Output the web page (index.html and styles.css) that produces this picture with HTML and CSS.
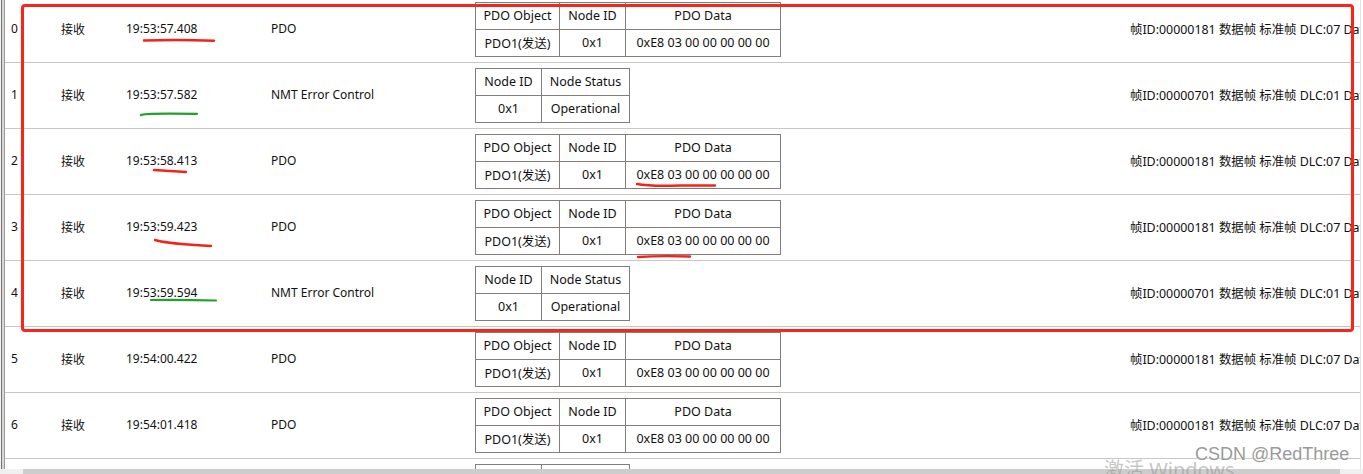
FILE: index.html
```html
<!DOCTYPE html>
<html lang="zh">
<head>
<meta charset="utf-8">
<title>CAN 报文</title>
<link rel="stylesheet" href="styles.css">
</head>
<body>
<div class="window">
  <div class="main">
    <div class="edge1"><div class="edge2"><div class="edge3">
      <div class="view">
        <div class="list">
          <div class="row">
            <div class="c-idx">0</div><div class="c-dir">接收</div><div class="c-time">19:53:57.408</div><div class="c-type">PDO</div>
            <div class="c-tbl"><div class="mt pdo"><div class="mc">PDO Object</div><div class="mc">Node ID</div><div class="mc">PDO Data</div><div class="mc">PDO1(发送)</div><div class="mc">0x1</div><div class="mc">0xE8 03 00 00 00 00 00</div></div></div>
            <div class="c-frame">帧ID:00000181 数据帧 标准帧 DLC:07 Data:E8 03 00 00 00 00 00</div>
          </div>
          <div class="row">
            <div class="c-idx">1</div><div class="c-dir">接收</div><div class="c-time">19:53:57.582</div><div class="c-type">NMT Error Control</div>
            <div class="c-tbl"><div class="mt nmt"><div class="mc">Node ID</div><div class="mc">Node Status</div><div class="mc">0x1</div><div class="mc">Operational</div></div></div>
            <div class="c-frame">帧ID:00000701 数据帧 标准帧 DLC:01 Data:05</div>
          </div>
          <div class="row">
            <div class="c-idx">2</div><div class="c-dir">接收</div><div class="c-time">19:53:58.413</div><div class="c-type">PDO</div>
            <div class="c-tbl"><div class="mt pdo"><div class="mc">PDO Object</div><div class="mc">Node ID</div><div class="mc">PDO Data</div><div class="mc">PDO1(发送)</div><div class="mc">0x1</div><div class="mc">0xE8 03 00 00 00 00 00</div></div></div>
            <div class="c-frame">帧ID:00000181 数据帧 标准帧 DLC:07 Data:E8 03 00 00 00 00 00</div>
          </div>
          <div class="row">
            <div class="c-idx">3</div><div class="c-dir">接收</div><div class="c-time">19:53:59.423</div><div class="c-type">PDO</div>
            <div class="c-tbl"><div class="mt pdo"><div class="mc">PDO Object</div><div class="mc">Node ID</div><div class="mc">PDO Data</div><div class="mc">PDO1(发送)</div><div class="mc">0x1</div><div class="mc">0xE8 03 00 00 00 00 00</div></div></div>
            <div class="c-frame">帧ID:00000181 数据帧 标准帧 DLC:07 Data:E8 03 00 00 00 00 00</div>
          </div>
          <div class="row">
            <div class="c-idx">4</div><div class="c-dir">接收</div><div class="c-time">19:53:59.594</div><div class="c-type">NMT Error Control</div>
            <div class="c-tbl"><div class="mt nmt"><div class="mc">Node ID</div><div class="mc">Node Status</div><div class="mc">0x1</div><div class="mc">Operational</div></div></div>
            <div class="c-frame">帧ID:00000701 数据帧 标准帧 DLC:01 Data:05</div>
          </div>
          <div class="row">
            <div class="c-idx">5</div><div class="c-dir">接收</div><div class="c-time">19:54:00.422</div><div class="c-type">PDO</div>
            <div class="c-tbl"><div class="mt pdo"><div class="mc">PDO Object</div><div class="mc">Node ID</div><div class="mc">PDO Data</div><div class="mc">PDO1(发送)</div><div class="mc">0x1</div><div class="mc">0xE8 03 00 00 00 00 00</div></div></div>
            <div class="c-frame">帧ID:00000181 数据帧 标准帧 DLC:07 Data:E8 03 00 00 00 00 00</div>
          </div>
          <div class="row">
            <div class="c-idx">6</div><div class="c-dir">接收</div><div class="c-time">19:54:01.418</div><div class="c-type">PDO</div>
            <div class="c-tbl"><div class="mt pdo"><div class="mc">PDO Object</div><div class="mc">Node ID</div><div class="mc">PDO Data</div><div class="mc">PDO1(发送)</div><div class="mc">0x1</div><div class="mc">0xE8 03 00 00 00 00 00</div></div></div>
            <div class="c-frame">帧ID:00000181 数据帧 标准帧 DLC:07 Data:E8 03 00 00 00 00 00</div>
          </div>
          <div class="row">
            <div class="c-idx">7</div><div class="c-dir">接收</div><div class="c-time">19:54:01.594</div><div class="c-type">NMT Error Control</div>
            <div class="c-tbl"><div class="mt nmt"><div class="mc">Node ID</div><div class="mc">Node Status</div><div class="mc">0x1</div><div class="mc">Operational</div></div></div>
            <div class="c-frame">帧ID:00000701 数据帧 标准帧 DLC:01 Data:05</div>
          </div>
        </div>
      </div>
    </div></div></div>
  </div>
  <div class="hscroll">
    <div class="sb-btn"><span class="arrow-l"></span></div>
    <div class="sb-thumb"></div>
    <div class="sb-btn"><span class="arrow-r"></span></div>
  </div>
</div>

<svg class="marks" width="1363" height="474" viewBox="0 0 1363 474" xmlns="http://www.w3.org/2000/svg">
  <path d="M22.5 8 Q22.5 5.5 25 5.5 L1350 5.5 Q1352.5 5.5 1352.5 8 L1352.5 328 Q1352.5 330.5 1350 330.5 L25 330.5 Q22.5 330.5 22.5 328 Z" fill="none" stroke="#fb2419" stroke-width="3"/>
  <path d="M144 40.5 Q180 39.5 214 40.8" fill="none" stroke="#f5221a" stroke-width="2.4" stroke-linecap="round"/>
  <path d="M141 115 Q143 113.5 170 113.6 L197 113.8" fill="none" stroke="#22a12a" stroke-width="2.2" stroke-linecap="round"/>
  <path d="M154 170 Q170 171 186 172" fill="none" stroke="#f5221a" stroke-width="2.4" stroke-linecap="round"/>
  <path d="M637 184 Q650 186.5 680 185.5 L715 185.5" fill="none" stroke="#f5221a" stroke-width="2.4" stroke-linecap="round"/>
  <path d="M155 240 Q165 243 195 245 L211 246" fill="none" stroke="#f5221a" stroke-width="2.4" stroke-linecap="round"/>
  <path d="M638 257 Q660 255.5 690 256.5" fill="none" stroke="#f5221a" stroke-width="2.4" stroke-linecap="round"/>
  <path d="M151 300 Q180 299.5 216 300.5" fill="none" stroke="#22a12a" stroke-width="2.2" stroke-linecap="round"/>
</svg>
<div class="wm-win">激活 Windows</div>
<div class="wm-csdn">CSDN @RedThree</div>
</body>
</html>
```
FILE: styles.css
```css
html, body {
  margin: 0;
  padding: 0;
  background: #ffffff;
  overflow: hidden;
}
body {
  width: 1363px;
  height: 474px;
  position: relative;
  font-family: "Noto Sans", "Noto Sans CJK SC", sans-serif;
  font-size: 12px;
  color: #111111;
}
.window {
  display: flex;
  flex-direction: column;
  height: 474px;
}
.main {
  height: 469px;
  flex: none;
  display: flex;
  border-left: 1px solid #f2f2f2;
  overflow: hidden;
}
.edge1 {
  flex: 1;
  display: flex;
  border-left: 1px solid #767676;
}
.edge2 {
  flex: 1;
  display: flex;
  border-left: 2px solid #d6d6d6;
}
.edge3 {
  flex: 1;
  display: flex;
  border-left: 1px solid #9c9c9c;
  padding-right: 2px;
}
.view {
  flex: 1;
  overflow: hidden;
  border-right: 1px solid #e4e4e4;
}
.list {
  margin-top: -3px;
  display: flex;
  flex-direction: column;
}
.row {
  height: 66px;
  box-sizing: border-box;
  border-bottom: 1px solid #c8c8c2;
  display: grid;
  grid-template-columns: 50px 65px 145px 204px 655px 1fr;
  align-items: center;
  padding-left: 6px;
  white-space: nowrap;
}
.c-idx, .c-dir, .c-time, .c-type, .c-frame {
  padding-bottom: 2px;
}
.c-frame {
  overflow: hidden;
  font-size: 12.4px;
}
.c-tbl {
  display: flex;
}
.mt {
  display: grid;
  border-left: 1px solid #837d7b;
  border-top: 1px solid #837d7b;
  grid-auto-rows: 27px;
  font-size: 12.5px;
}
.pdo {
  grid-template-columns: 84px 66px 155px;
}
.nmt {
  grid-template-columns: 66px 88px;
}
.mc {
  box-sizing: border-box;
  border-right: 1px solid #837d7b;
  border-bottom: 1px solid #837d7b;
  display: flex;
  align-items: center;
  justify-content: center;
  padding-bottom: 1px;
}
.hscroll {
  height: 17px;
  flex: none;
  display: flex;
  background: #f0f0f0;
}
.sb-btn {
  width: 23px;
  flex: none;
  display: flex;
  justify-content: center;
  padding-top: 5px;
  box-sizing: border-box;
}
.arrow-l, .arrow-r {
  width: 0;
  height: 0;
  border-top: 4px solid transparent;
  border-bottom: 4px solid transparent;
}
.arrow-l { border-right: 4px solid #606060; }
.arrow-r { border-left: 4px solid #606060; }
.sb-thumb {
  flex: 1;
  background: #cdcdcd;
}
.marks {
  position: absolute;
  left: 0;
  top: 0;
  pointer-events: none;
}
.wm-win {
  position: absolute;
  left: 1104px;
  top: 454px;
  font-family: "Noto Sans", "Noto Sans CJK SC", sans-serif;
  font-size: 20px;
  color: rgba(150, 150, 150, 0.55);
  white-space: nowrap;
}
.wm-csdn {
  position: absolute;
  left: 1195px;
  top: 444px;
  font-family: "Liberation Sans", sans-serif;
  font-size: 18px;
  color: #9a9a9a;
  text-shadow: 0 0 2px #ffffff, 0 0 1px #ffffff;
  white-space: nowrap;
}
```
